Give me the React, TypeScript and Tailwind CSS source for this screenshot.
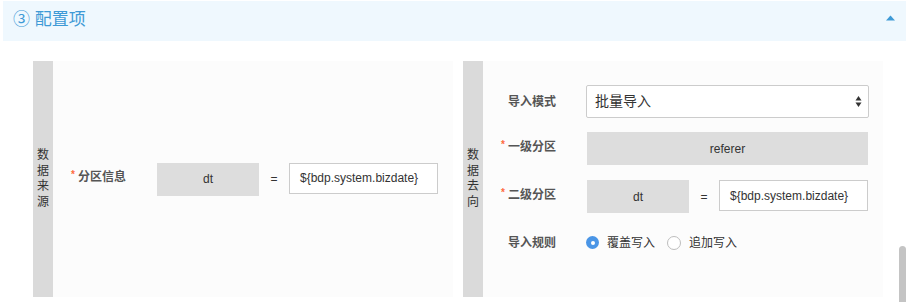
import React from "react";

const FONT = { fontFamily: '"Liberation Sans", "Noto Sans CJK SC", sans-serif' };

function Star() {
  return <span className="mr-[3px] text-[10px] leading-none text-[#ff6a3c] relative top-[-2px]">*</span>;
}

function SideBar({ text }: { text: string }) {
  return (
    <div className="w-[20px] shrink-0 bg-[#dadada] flex items-center justify-center">
      <div className="flex flex-col items-center text-[12px] leading-[15.5px] text-[#333]">
        {text.split("").map((c, i) => (
          <span key={i}>{c}</span>
        ))}
      </div>
    </div>
  );
}

function Radio({ checked, label }: { checked: boolean; label: string }) {
  return (
    <div className="flex items-center">
      {checked ? (
        <span className="w-[13px] h-[13px] rounded-full bg-[#4a95e6] flex items-center justify-center">
          <span className="w-[4px] h-[4px] rounded-full bg-white" />
        </span>
      ) : (
        <span className="w-[14px] h-[14px] rounded-full border border-[#bdbdbd] bg-white" />
      )}
      <span className="ml-[8px] text-[12px] text-[#333]">{label}</span>
    </div>
  );
}

export default function App() {
  return (
    <div className="relative w-[906px] h-[302px] bg-white overflow-hidden" style={FONT}>
      <div className="mt-[1px] ml-[3px] h-[40px] bg-[#eff8fe] flex items-center justify-between pl-[10px] pr-[11px]">
        <span className="text-[17px] text-[#3e9ad6] leading-none relative top-[-2px]">③ 配置项</span>
        <svg width="9" height="6" viewBox="0 0 9 6" className="relative top-[-3px]">
          <path d="M0 5.5 L4.5 0.5 L9 5.5 Z" fill="#3e9ad6" />
        </svg>
      </div>

      <div className="mt-[20px] ml-[33px] flex gap-[10px] h-[236px]">
        {/* Left panel */}
        <div className="w-[420px] flex bg-[#fcfcfc]">
          <SideBar text="数据来源" />
          <div className="flex items-center pl-[18px]">
            <div className="w-[86px] flex items-center text-[12px] font-bold text-[#555] relative top-[-2px]">
              <Star />
              <span>分区信息</span>
            </div>
            <div className="w-[102px] h-[33px] bg-[#dddddd] flex items-center justify-center text-[12px] text-[#333]">dt</div>
            <div className="w-[30px] text-center text-[12px] text-[#333]">=</div>
            <div className="w-[149px] h-[31px] border border-[#cccccc] bg-white flex items-center pl-[10px] text-[12px] text-[#333] relative top-[-1px]">
              {"${bdp.system.bizdate}"}
            </div>
          </div>
        </div>

        {/* Right panel */}
        <div className="w-[420px] flex bg-[#fcfcfc]">
          <SideBar text="数据去向" />
          <div className="flex flex-col pt-[24px]">
            <div className="flex items-center h-[33px]">
              <div className="w-[73px] text-right text-[12px] font-bold text-[#555]">导入模式</div>
              <div className="ml-[30px] w-[283px] h-[33px] border border-[#cccccc] bg-white rounded-[2px] flex items-center justify-between pl-[8px] pr-[6px]">
                <span className="text-[14px] text-[#333]">批量导入</span>
                <svg width="7" height="13" viewBox="0 0 7 13">
                  <path d="M0.5 5.5 L3.5 1 L6.5 5.5 Z" fill="#333" />
                  <path d="M0.5 7.5 L3.5 12 L6.5 7.5 Z" fill="#333" />
                </svg>
              </div>
            </div>
            <div className="flex items-center h-[33px] mt-[14px]">
              <div className="w-[73px] flex items-center justify-end text-[12px] font-bold text-[#555] relative top-[-2px]">
                <Star />
                <span>一级分区</span>
              </div>
              <div className="ml-[31px] w-[281px] h-[33px] bg-[#dddddd] flex items-center justify-center text-[12px] text-[#333]">referer</div>
            </div>
            <div className="flex items-center h-[33px] mt-[15px]">
              <div className="w-[73px] flex items-center justify-end text-[12px] font-bold text-[#555] relative top-[-2px]">
                <Star />
                <span>二级分区</span>
              </div>
              <div className="ml-[31px] w-[102px] h-[33px] bg-[#dddddd] flex items-center justify-center text-[12px] text-[#333]">dt</div>
              <div className="w-[30px] text-center text-[12px] text-[#333]">=</div>
              <div className="w-[149px] h-[31px] border border-[#cccccc] bg-white flex items-center pl-[10px] text-[12px] text-[#333] relative top-[-1px]">
                {"${bdp.system.bizdate}"}
              </div>
            </div>
            <div className="flex items-center h-[33px] mt-[13px]">
              <div className="w-[73px] text-right text-[12px] font-bold text-[#555]">导入规则</div>
              <div className="ml-[30px] flex items-center gap-[12px]">
                <Radio checked label="覆盖写入" />
                <Radio checked={false} label="追加写入" />
              </div>
            </div>
          </div>
        </div>
      </div>

      <div className="absolute left-[899px] top-[246px] w-[7px] h-[70px] rounded-full bg-[#c4c4c4]" />
    </div>
  );
}
